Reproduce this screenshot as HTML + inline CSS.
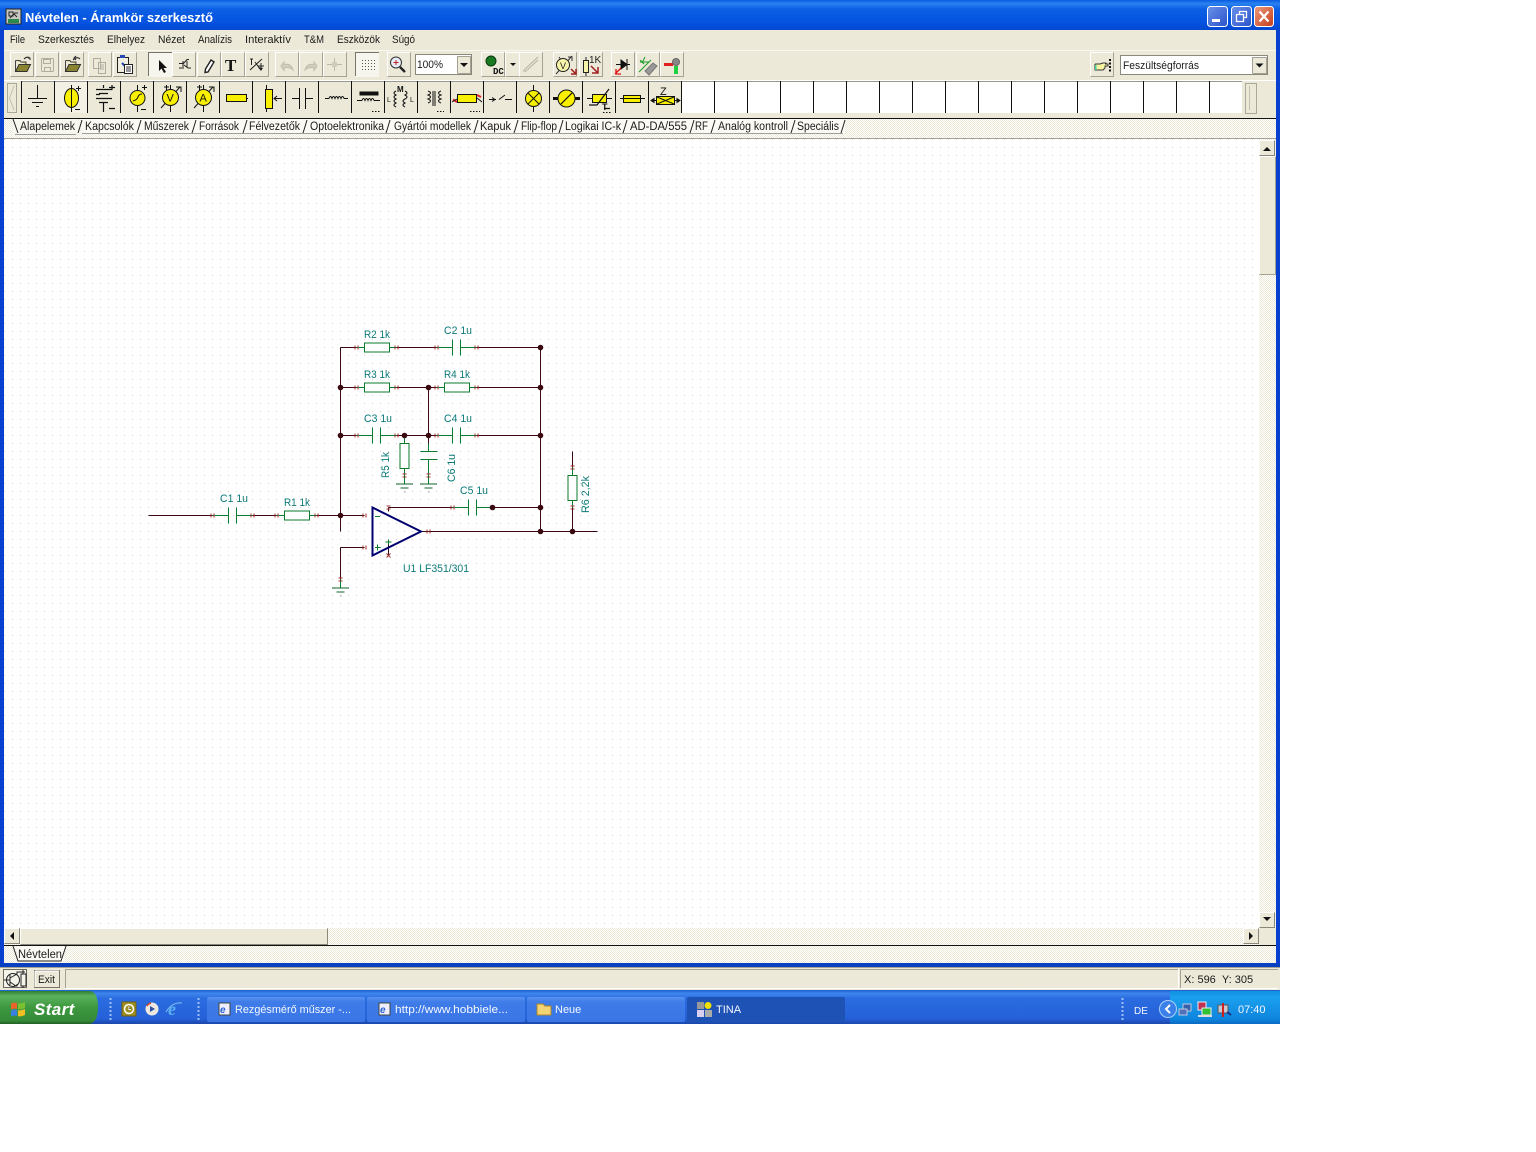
<!DOCTYPE html>
<html><head><meta charset="utf-8"><title>Névtelen - Áramkör szerkesztő</title>
<style>
html,body{margin:0;padding:0;background:#fff;width:1536px;height:1152px;overflow:hidden}
svg{display:block;font-family:"Liberation Sans",sans-serif}
.m{font-size:11px;fill:#1a1a1a}
.l{font-size:11px;fill:#0b7a78}
.t{font-size:11.500px;fill:#1a1a1a}
.w{font-size:11px;fill:#f4f7ff}
</style></head><body>
<svg width="1536" height="1152" viewBox="0 0 1536 1152" xmlns="http://www.w3.org/2000/svg">
<defs>
<linearGradient id="tb" x1="0" y1="0" x2="0" y2="1"><stop offset="0" stop-color="#0a5ae0"/><stop offset=".12" stop-color="#2a83f0"/><stop offset=".3" stop-color="#0c5fe4"/><stop offset=".75" stop-color="#0553e0"/><stop offset="1" stop-color="#0347d0"/></linearGradient>
<linearGradient id="tk" x1="0" y1="0" x2="0" y2="1"><stop offset="0" stop-color="#1d5fd0"/><stop offset=".1" stop-color="#3f86ee"/><stop offset=".25" stop-color="#2a6ce0"/><stop offset=".85" stop-color="#2560d8"/><stop offset="1" stop-color="#1a47a8"/></linearGradient>
<linearGradient id="tr" x1="0" y1="0" x2="0" y2="1"><stop offset="0" stop-color="#1290e0"/><stop offset=".2" stop-color="#1aa0ee"/><stop offset=".85" stop-color="#0f85de"/><stop offset="1" stop-color="#0c6ac0"/></linearGradient>
<linearGradient id="st" x1="0" y1="0" x2="0" y2="1"><stop offset="0" stop-color="#2d7d34"/><stop offset=".15" stop-color="#5ab25c"/><stop offset=".5" stop-color="#3d983f"/><stop offset=".9" stop-color="#358a38"/><stop offset="1" stop-color="#215f24"/></linearGradient>
<linearGradient id="bt" x1="0" y1="0" x2="0" y2="1"><stop offset="0" stop-color="#5a92f0"/><stop offset=".2" stop-color="#3e7ce8"/><stop offset="1" stop-color="#3a76e6"/></linearGradient>
<linearGradient id="mb" x1="0" y1="0" x2="1" y2="1"><stop offset="0" stop-color="#6a92ea"/><stop offset="1" stop-color="#2a52c8"/></linearGradient>
<linearGradient id="cb" x1="0" y1="0" x2="1" y2="1"><stop offset="0" stop-color="#eb9a7e"/><stop offset="1" stop-color="#c63c18"/></linearGradient>
<pattern id="d" width="2" height="2" patternUnits="userSpaceOnUse"><rect width="2" height="2" fill="#fff"/><rect width="1" height="1" fill="#ece9d8"/><rect x="1" y="1" width="1" height="1" fill="#ece9d8"/></pattern>
<pattern id="g" width="8" height="8" patternUnits="userSpaceOnUse" x="4" y="3"><rect width="8" height="8" fill="#fff"/><rect width="1" height="1" fill="#d0d0c4"/></pattern>
<g id="b"><rect width="24" height="25" fill="#ece9d8"/><path d="M.5 24V.5H23" stroke="#fff" fill="none"/><path d="M.5 24.500H23.500V.5" stroke="#a5a294" fill="none"/></g>
<g id="sb"><rect width="16" height="16" fill="#ece9d8"/><path d="M.5 15V.5H15" stroke="#fff" fill="none"/><path d="M.5 15.500H15.500V.5" stroke="#8a887a" fill="none"/></g>
<g id="gnd" stroke="#0a6a28" fill="none"><path d="M-8.500 .5H8.500M-4 4.500H4"/><path d="M0 8.500H1" stroke="#777"/></g>
<g id="rh"><rect x="-12" y="-4.500" width="25" height="9" fill="#fff" stroke="#0a7a2e"/></g>
<g id="rv"><rect x="-4.500" y="-12" width="9" height="25" fill="#fff" stroke="#0a7a2e"/></g>
<g id="tk1"><path d="M-1.500 -2V2M1.500 -2V2" stroke="#9a3030" fill="none"/></g>
<g id="tk2"><path d="M-2 -1.500H2M-2 1.500H2" stroke="#9a3030" fill="none"/></g>
<g id="cap"><path d="M0 -8V8M8 -8V8" stroke="#0a7a2e" fill="none"/></g>
</defs>

<!-- background -->
<rect width="1536" height="1152" fill="#fff"/>
<rect width="1280" height="30" fill="url(#tb)"/>
<rect y="30" width="4" height="937" fill="#0840d0"/>
<rect x="1276" y="30" width="4" height="937" fill="#0840d0"/>
<rect x="4" y="30" width="1272" height="88" fill="#ece9d8"/>

<!-- title -->
<rect x="6" y="9" width="15" height="15" fill="#c8c8c0" stroke="#222"/>
<path d="M9 12h4v4H9zM14 13h4M10 18l4-4 3 3" stroke="#222" fill="none"/>
<rect x="8" y="19" width="11" height="4" fill="#2a8a4a"/>
<text x="25" y="22" font-size="13" font-weight="700" fill="#fff" textLength="188" lengthAdjust="spacingAndGlyphs">Névtelen - Áramkör szerkesztő</text>

<!-- caption buttons -->
<rect x="1207.500" y="6.500" width="20" height="20" rx="3" fill="url(#mb)" stroke="#fff"/>
<rect x="1212" y="19" width="8" height="3" fill="#fff"/>
<rect x="1231.500" y="6.500" width="20" height="20" rx="3" fill="url(#mb)" stroke="#fff"/>
<path d="M1239.500 14.500V11.500H1246.500V17.500H1243.500M1236.500 14.500H1243.500V21.500H1236.500Z" stroke="#fff" fill="none" stroke-width="1.300"/>
<rect x="1254.500" y="6.500" width="19" height="20" rx="3" fill="url(#cb)" stroke="#fff"/>
<path d="M1259.500 11.500L1268.500 21.500M1268.500 11.500L1259.500 21.500" stroke="#fff" stroke-width="2.200"/>

<!-- menu -->
<text class="m" x="10" y="43" textLength="15" lengthAdjust="spacingAndGlyphs">File</text>
<text class="m" x="38" y="43" textLength="56" lengthAdjust="spacingAndGlyphs">Szerkesztés</text>
<text class="m" x="107" y="43" textLength="38" lengthAdjust="spacingAndGlyphs">Elhelyez</text>
<text class="m" x="158" y="43" textLength="27" lengthAdjust="spacingAndGlyphs">Nézet</text>
<text class="m" x="198" y="43" textLength="34" lengthAdjust="spacingAndGlyphs">Analízis</text>
<text class="m" x="245" y="43" textLength="46" lengthAdjust="spacingAndGlyphs">Interaktív</text>
<text class="m" x="304" y="43" textLength="20" lengthAdjust="spacingAndGlyphs">T&amp;M</text>
<text class="m" x="337" y="43" textLength="43" lengthAdjust="spacingAndGlyphs">Eszközök</text>
<text class="m" x="392" y="43" textLength="23" lengthAdjust="spacingAndGlyphs">Súgó</text>
<rect x="4" y="50" width="1272" height="1" fill="#f8f7f0"/>

<!-- toolbar 1 -->
<use href="#b" x="10" y="52"/><use href="#b" x="35" y="52"/><use href="#b" x="60" y="52"/>
<use href="#b" x="88" y="52"/><use href="#b" x="113" y="52"/>
<rect x="148" y="52" width="24" height="25" fill="#f7f6ee"/><path d="M148.500 76V52.500H172" stroke="#77756a" fill="none"/>
<use href="#b" x="172" y="52"/><use href="#b" x="197" y="52"/><use href="#b" x="221" y="52"/><use href="#b" x="245" y="52"/>
<use href="#b" x="275" y="52"/><use href="#b" x="299" y="52"/><use href="#b" x="323" y="52"/>
<rect x="355" y="52" width="24" height="25" fill="#f7f6ee"/><path d="M355.500 76V52.500H379" stroke="#77756a" fill="none"/>
<use href="#b" x="387" y="52"/>
<use href="#b" x="481" y="52"/><use href="#b" x="505" y="52"/><use href="#b" x="519" y="52"/>
<use href="#b" x="553" y="52"/><use href="#b" x="579" y="52"/>
<use href="#b" x="611" y="52"/><use href="#b" x="636" y="52"/><use href="#b" x="660" y="52"/>
<use href="#b" x="1090" y="52"/>

<!-- open -->
<path d="M15.500 60.500H20L21 62H26V64M15.500 60.500V71.500" fill="#d8c860" stroke="#444"/><path d="M15.500 71.500L19 64.500H30.500L27 71.500Z" fill="#8a8430" stroke="#333"/><path d="M24 59q3-3 6-1m0 0l-2 0m2 0l0 2" stroke="#222" fill="none"/>
<!-- save disabled -->
<rect x="41.500" y="58.500" width="12" height="13" rx="1" fill="none" stroke="#b0ad9f"/><rect x="43.500" y="59.500" width="7" height="4" fill="none" stroke="#b0ad9f"/><rect x="44.500" y="67.500" width="6" height="4" fill="none" stroke="#b0ad9f"/>
<!-- open2 -->
<path d="M65.500 60.500H70L71 62H76V64M65.500 60.500V71.500" fill="#d8c860" stroke="#444"/><path d="M65.500 71.500L69 64.500H80.500L77 71.500Z" fill="#8a8430" stroke="#333"/><path d="M73 60q4-4 7-1m-4-3l-2 2 2 2" stroke="#222" fill="none"/>
<!-- copy disabled -->
<path d="M93.500 58.500h7v10h-7zM98.500 62.500h7v11h-7z" fill="#ece9d8" stroke="#b0ad9f"/><path d="M100 65h4M100 67h4M100 69h4" stroke="#b0ad9f"/>
<!-- paste -->
<rect x="117.500" y="57.500" width="11" height="15" fill="#f0eee0" stroke="#222"/><rect x="120" y="55" width="5" height="3" fill="#2848b8"/><path d="M122 63l6 6" stroke="#1a3fb0" stroke-width="2"/><path d="M124.500 64.500h8v9h-8z" fill="#fff" stroke="#222"/><path d="M126 67h5M126 69h5M126 71h5" stroke="#333"/>
<!-- pointer -->
<path d="M159 60V71L161.500 68.500L164 73L166 72L163.500 68H167Z" fill="#111"/>
<!-- wire tool -->
<path d="M179 64.500H183M187 62V68M183 62V70M189 60.500H187L183 65M184 66L188 69H191M179 69H182" stroke="#222" fill="none" transform="translate(0 -1)"/>
<!-- pencil -->
<path d="M211 60L214 62L208 72L205 72.500L205.500 69Z" fill="#fff" stroke="#222" stroke-width="1.400"/>
<!-- T -->
<text x="225" y="71" font-family="Liberation Serif,serif" font-size="17" font-weight="700" fill="#111">T</text>
<!-- 1/4 -->
<path d="M250 70L262 59M250 59H253M251.500 59V65M258 66H264M261 63V70M255 62L260 69" stroke="#222" fill="none"/><path d="M258 67l5 1-2 3z" fill="#222"/>
<!-- undo/redo disabled -->
<path d="M281 66L284 62V64.500Q291 63 293 70Q289 66.500 284 68V70.500Z" fill="#d2cfbf" stroke="#c0bdae"/>
<path d="M317 66L314 62V64.500Q307 63 305 70Q309 66.500 314 68V70.500Z" fill="#d2cfbf" stroke="#c0bdae"/>
<path d="M327 64.500H342M334.500 58V71" stroke="#bcb9aa"/><rect x="332" y="62" width="5" height="5" fill="#cfccbd"/>
<!-- grid -->
<path d="M362 60.500h13M362 63.500h13M362 66.500h13M362 69.500h13" stroke="#555" stroke-dasharray="1 2"/>
<!-- zoom -->
<circle cx="396" cy="62.500" r="5.500" fill="#e8eef8" stroke="#333"/><path d="M393.500 62.500h5M396 60v5" stroke="#c02020"/><path d="M400 67l5 5" stroke="#222" stroke-width="2.400"/>
<!-- zoom combo -->
<rect x="415.500" y="54.500" width="56" height="20" fill="#fff" stroke="#8a887a"/>
<rect x="457" y="56" width="14" height="18" fill="#ece9d8"/><path d="M457.500 73V56.500H470.500M457.500 73.500H470.500V56.500" stroke="#a5a294" fill="none"/><path d="M460 63h8l-4 4z" fill="#111"/>
<text x="417" y="68" class="m" textLength="26" lengthAdjust="spacingAndGlyphs">100%</text>
<!-- DC -->
<circle cx="491" cy="61" r="5" fill="#1a7a22" stroke="#0a3a10"/><text x="493" y="74" font-family="Liberation Mono,monospace" font-size="9" font-weight="700" fill="#111">DC</text>
<path d="M510 63h6l-3 3z" fill="#111"/>
<path d="M523 71L538 57M525 72L538 60" stroke="#b5b2a2" fill="none"/><path d="M523 72l2-5 4 3z" fill="#cfccbd"/>
<!-- meter -->
<path d="M556 74L572 56M568 57h4v4M559 57l2 3" stroke="#333" fill="none"/><circle cx="563" cy="65" r="6.500" fill="#f6f4a8" stroke="#222"/><text x="560" y="69" font-size="9" fill="#222">V</text><path d="M571 69l5 5m-5 0h5v-5" stroke="#a02020" fill="none" stroke-width="1.500"/>
<rect x="583.500" y="60.500" width="5" height="12" fill="#f6f4a8" stroke="#222"/><path d="M586 57v3M586 73v3" stroke="#222"/><text x="589" y="63" font-size="10" fill="#222">1K</text><path d="M591 66l7 7m-6 0h6v-6" stroke="#a02020" fill="none" stroke-width="1.500"/>
<!-- diode etc -->
<path d="M616 64.500H630M621 60v9l6-4.500z" fill="#111" stroke="#111"/><path d="M627 59V70" stroke="#111"/><path d="M615 74l6-6m-5 1v5h5" stroke="#e01010" fill="none" stroke-width="1.300"/>
<path d="M639 72L651 60M645 57l-3 6M640 60l4 4M649 62l-9 0" stroke="#1a9a2a" fill="none"/><path d="M645 71l8-8 4 3-8 9z" fill="#999" stroke="#777"/>
<rect x="664" y="63" width="9" height="3" fill="#e02020"/><circle cx="676" cy="62" r="3.500" fill="#888" stroke="#666"/><rect x="674" y="66" width="4" height="8" fill="#20d040"/>
<!-- hand -->
<path d="M1095 64h5l3-1h3v1h-1M1095 64v6h8l2-2v-2h3v-2h-3" fill="#f8f4a0" stroke="#333"/><path d="M1110 59v13" stroke="#111" stroke-width="2" stroke-dasharray="2 1.500"/>
<rect x="1095" y="65" width="1.500" height="5" fill="#40d0a0"/>
<!-- source combo -->
<rect x="1120.500" y="55.500" width="147" height="19" fill="#fff" stroke="#8a887a"/>
<rect x="1252" y="57" width="15" height="17" fill="#ece9d8"/><path d="M1252.500 73V57.500H1266.500M1252.500 73.500H1266.500V57.500" stroke="#a5a294" fill="none"/><path d="M1255.500 63.500h8l-4 4z" fill="#111"/>
<text class="m" x="1123" y="69" textLength="76" lengthAdjust="spacingAndGlyphs">Feszültségforrás</text>

<!-- toolbar 2 -->
<rect x="4" y="80" width="1272" height="1" fill="#fff"/>
<rect x="7.500" y="83.500" width="9" height="29" fill="#ece9d8" stroke="#aaa89a"/>
<path d="M14 86L9.500 98L14 110" stroke="#c2c0b2" fill="none"/>
<path d="M21 81.500H1242" stroke="#9a988a"/>
<rect x="681" y="82" width="561" height="31" fill="#fff"/>
<rect x="54" y="82" width="33" height="31" fill="#f3f1e6"/>
<path d="M21.500 81V113M54.500 81V113M87.500 81V113M120.500 81V113M153.500 81V113M186.500 81V113M219.500 81V113M252.500 81V113M285.500 81V113M318.500 81V113M351.500 81V113M384.500 81V113M417.500 81V113M450.500 81V113M483.500 81V113M516.500 81V113M549.500 81V113M582.500 81V113M615.500 81V113M648.500 81V113M681.500 81V113M714.500 81V113M747.500 81V113M780.500 81V113M813.500 81V113M846.500 81V113M879.500 81V113M912.500 81V113M945.500 81V113M978.500 81V113M1011.500 81V113M1044.500 81V113M1077.500 81V113M1110.500 81V113M1143.500 81V113M1176.500 81V113M1209.500 81V113" stroke="#111"/>
<rect x="1245.500" y="83.500" width="11" height="30" fill="#ece9d8" stroke="#aaa89a"/><path d="M1249.500 86V110" stroke="#c2c0b2"/>

<!-- component icons -->
<g stroke="#111" fill="none">
<path d="M37.500 85V98M28 98.500H47M32 102.500H43M36 106.500H39"/>
<path d="M71.500 85V112"/><ellipse cx="71.500" cy="98" rx="7" ry="9.500" fill="#f8f000"/><path d="M71.500 89V107" /><path d="M76 88.500H81M78.500 86V91M75 109.500H80"/>
<path d="M103.500 85V88M96 89.500H112M99 93.500H108M96 98.500H112M99 102.500H108M103.500 103V112M109 87.500H115M112 85V90M109 108.500H115M96 94.500H100" stroke-width="1.200"/>
<path d="M137.500 85V112"/><circle cx="137.500" cy="98" r="7.500" fill="#f8f000"/><path d="M133 101Q137 100 138 97T142 94"/><path d="M142 87.500H147M144.500 85V90M141 109.500H146"/>
<path d="M170.500 85V112M161 108L180 87M176 87h5v5M164 87h5M166.500 85v5"/><circle cx="170.500" cy="97.500" r="8" fill="#f8f000"/><text x="166.500" y="101.500" font-size="11" fill="#111" stroke="none">V</text>
<path d="M203.500 85V112M194 108L213 87M209 87h5v5M197 87h5M199.500 85v5"/><circle cx="203.500" cy="97.500" r="8" fill="#f8f000"/><text x="199.500" y="101.500" font-size="11" fill="#111" stroke="none">A</text>
<path d="M226 98.500H248"/><rect x="226.500" y="94.500" width="20" height="7" fill="#f8f000" stroke-width="1"/>
<path d="M266.500 85V112"/><rect x="265.500" y="89.500" width="7" height="19" fill="#f8f000"/><path d="M282 98.500H274M277 96l-3 2.500 3 2.500"/>
<path d="M292 98.500H299M305 98.500H313M299.500 88V109M305.500 88V109"/>
<path d="M325 98.500H329M344 98.500H348M329 98.500q1.500-4 3 0q1.500-4 3 0q1.500-4 3 0q1.500-4 3 0q1.500-4 3 0"/>
<path d="M357 100.500H362M374 100.500H380M362 100.500q1.500-4 3 0q1.500-4 3 0q1.500-4 3 0q1.500-4 3 0"/><rect x="360" y="92" width="18" height="3" fill="#111"/><path d="M372 111.500H381" stroke-dasharray="1.500 1.500"/>
<text x="397" y="92" font-size="8" font-weight="700" fill="#111" stroke="none">M</text><path d="M396 91q-4 2 0 4q-4 2 0 4q-4 2 0 4q-4 2 0 4M405 91q4 2 0 4q4 2 0 4q-4 2 0 4q-4 2 0 4"/><text x="387" y="102" font-size="7" fill="#111" stroke="none">L</text><text x="410" y="102" font-size="7" fill="#111" stroke="none">L</text>
<path d="M428 91q5 2 0 4q5 2 0 4q5 2 0 4M441 91q-5 2 0 4q-5 2 0 4q-5 2 0 4M433 91V106M435 91V106" stroke-width="1"/><path d="M437 111.500H444" stroke-dasharray="1.500 1.500"/>
<path d="M453 99.500L457 102M481 97L477 95" stroke="#e02020" stroke-width="2"/><rect x="457.500" y="94.500" width="19" height="8" fill="#f8f000"/><path d="M470 111.500H480" stroke-dasharray="1.500 1.500"/><path d="M452 102L457 99M477 98L482 102"/>
<path d="M489 99.500H496M499 99.500L505 95M505 99.500H512M492 97.500l3 2-3 2"/>
<path d="M533.500 85V112"/><circle cx="533.500" cy="98.500" r="8" fill="#f8f000"/><path d="M528 93L539 104M539 93L528 104"/>
<path d="M553 98.500H580" stroke-width="3"/><circle cx="566.500" cy="98.500" r="8.500" fill="#f8f000"/><path d="M561 104L572 93" stroke-width="1.200"/>
<path d="M587 98.500H612"/><rect x="592.500" y="94.500" width="14" height="8" fill="#f8f000"/><path d="M589 105H597L609 89M604 108.500H610" stroke-width="1.200"/><text x="602" y="110" font-size="9" font-weight="700" fill="#111" stroke="none">T</text><path d="M603 112.500H611" stroke-dasharray="1.500 1.500"/>
<path d="M620 98.500H645"/><rect x="623.500" y="95.500" width="17" height="7" fill="#f8f000"/><path d="M622 98.500H642"/>
<text x="660" y="95" font-size="11" fill="#111" stroke="none">Z</text><path d="M651 100.500H680M651 100.500l3-2v4zM680 100.500l-3-2v4z" fill="#111"/><rect x="656.500" y="96.500" width="18" height="8" fill="#f8f000"/><path d="M657 97L674 104M674 97L657 104"/>
</g>

<!-- tab strip -->
<rect x="4" y="118" width="1272" height="1" fill="#111"/>
<rect x="4" y="119" width="1272" height="19" fill="url(#d)"/>
<rect x="13" y="119" width="66" height="15" fill="#f8f7ef"/>
<rect x="81" y="119" width="764" height="15" fill="#fbfaf4"/>
<path d="M82 133.500H843M15 134.500H76" stroke="#555" stroke-opacity=".55"/>
<g stroke="#222" fill="none">
<path d="M13 119L18 133"/>
<path d="M78 133Q80 127 82 120M137 133Q139 127 141 120M192 133Q194 127 196 120M243 133Q245 127 247 120M303 133Q305 127 307 120M386 133Q388 127 390 120M474 133Q476 127 478 120M514 133Q516 127 518 120M559 133Q561 127 563 120M623 133Q625 127 627 120M690 133Q692 127 694 120M711 133Q713 127 715 120M791 133Q793 127 795 120M841 133Q843 127 845 120"/>
</g>
<text class="t" x="20" y="130" textLength="55" lengthAdjust="spacingAndGlyphs">Alapelemek</text>
<text class="t" x="85" y="130" textLength="49" lengthAdjust="spacingAndGlyphs">Kapcsolók</text>
<text class="t" x="144" y="130" textLength="45" lengthAdjust="spacingAndGlyphs">Műszerek</text>
<text class="t" x="199" y="130" textLength="40" lengthAdjust="spacingAndGlyphs">Források</text>
<text class="t" x="249" y="130" textLength="51" lengthAdjust="spacingAndGlyphs">Félvezetők</text>
<text class="t" x="310" y="130" textLength="74" lengthAdjust="spacingAndGlyphs">Optoelektronika</text>
<text class="t" x="394" y="130" textLength="77" lengthAdjust="spacingAndGlyphs">Gyártói modellek</text>
<text class="t" x="480" y="130" textLength="31" lengthAdjust="spacingAndGlyphs">Kapuk</text>
<text class="t" x="521" y="130" textLength="36" lengthAdjust="spacingAndGlyphs">Flip-flop</text>
<text class="t" x="565" y="130" textLength="56" lengthAdjust="spacingAndGlyphs">Logikai IC-k</text>
<text class="t" x="630" y="130" textLength="57" lengthAdjust="spacingAndGlyphs">AD-DA/555</text>
<text class="t" x="695" y="130" textLength="13" lengthAdjust="spacingAndGlyphs">RF</text>
<text class="t" x="718" y="130" textLength="70" lengthAdjust="spacingAndGlyphs">Analóg kontroll</text>
<text class="t" x="797" y="130" textLength="42" lengthAdjust="spacingAndGlyphs">Speciális</text>

<!-- canvas -->
<rect x="4" y="138" width="1255" height="790" fill="url(#g)"/>
<rect x="4" y="138" width="1272" height="1" fill="#a5a294"/>

<!-- schematic -->
<g transform="translate(.5 .5)" fill="none">
<g stroke="#3a0810">
<path d="M340 347H356M396 347H436M476 347H540M340 387H356M396 387H436M476 387H540M340 435H356M396 435H436M476 435H540"/>
<path d="M340 347V531M340 547V579M540 347V531M428 387V435M404 435V443M428 435V451M148 515H212M252 515H276M316 515H364M388 507H452M492 507H540M421 531H597M364 547H340M572 451V467M572 507V531M404 468V475M428 459V475"/>
<path d="M388 507V511M388 541V555"/>
</g>
<g stroke="#0a7a2e">
<path d="M356 347H396M436 347H452M460 347H476M356 387H396M436 387H476M356 435H372M380 435H396M436 435H452M460 435H476M212 515H228M236 515H252M276 515H316M452 507H468M476 507H492"/>
<path d="M404 468V475M404 443V435M428 451V443M428 459V475M572 467V475M572 500V507"/>
</g>
<use href="#rh" x="376" y="347"/><use href="#rh" x="376" y="387"/><use href="#rh" x="456" y="387"/><use href="#rh" x="296" y="515"/>
<use href="#rv" x="404" y="455"/><use href="#rv" x="572" y="487"/>
<use href="#cap" x="452" y="347"/><use href="#cap" x="372" y="435"/><use href="#cap" x="452" y="435"/><use href="#cap" x="228" y="515"/><use href="#cap" x="468" y="507"/>
<path d="M420 451H437M420 459H437" stroke="#0a7a2e"/>
<use href="#gnd" x="404" y="483"/><use href="#gnd" x="428" y="483"/><use href="#gnd" x="340" y="587"/>
<path d="M404 475V483M428 475V483M340 579V587" stroke="#0a7a2e"/>
<use href="#tk1" x="356" y="347"/><use href="#tk1" x="396" y="347"/><use href="#tk1" x="436" y="347"/><use href="#tk1" x="476" y="347"/>
<use href="#tk1" x="356" y="387"/><use href="#tk1" x="396" y="387"/><use href="#tk1" x="436" y="387"/><use href="#tk1" x="476" y="387"/>
<use href="#tk1" x="356" y="435"/><use href="#tk1" x="396" y="435"/><use href="#tk1" x="436" y="435"/><use href="#tk1" x="476" y="435"/>
<use href="#tk1" x="212" y="515"/><use href="#tk1" x="252" y="515"/><use href="#tk1" x="276" y="515"/><use href="#tk1" x="316" y="515"/>
<use href="#tk1" x="364" y="515"/><use href="#tk1" x="364" y="547"/><use href="#tk1" x="428" y="531"/><use href="#tk1" x="452" y="507"/>
<use href="#tk2" x="404" y="475"/><use href="#tk2" x="428" y="475"/><use href="#tk2" x="572" y="467"/><use href="#tk2" x="572" y="507"/><use href="#tk2" x="340" y="579"/>
<use href="#tk2" x="388" y="507"/>
<path d="M386 553L390 557M390 553L386 557" stroke="#9a3030"/>
<path d="M372 507L420.500 531L372 555Z" stroke="#00006e" stroke-width="2"/>
<path d="M374.500 516H379.500M374.500 547H380M377 544V550M385 541.500H391M388 539V544" stroke="#0a7a2e"/>
<g fill="#3a0810">
<circle cx="340" cy="387" r="2.800"/><circle cx="340" cy="435" r="2.800"/><circle cx="340" cy="515" r="2.800"/>
<circle cx="428" cy="387" r="2.800"/><circle cx="428" cy="435" r="2.800"/><circle cx="404" cy="435" r="2.800"/>
<circle cx="540" cy="347" r="2.800"/><circle cx="540" cy="387" r="2.800"/><circle cx="540" cy="435" r="2.800"/><circle cx="540" cy="507" r="2.800"/><circle cx="540" cy="531" r="2.800"/>
<circle cx="572" cy="531" r="2.800"/><circle cx="492" cy="507" r="2.800"/>
</g>
</g>
<text class="l" x="364" y="338" textLength="26" lengthAdjust="spacingAndGlyphs">R2 1k</text>
<text class="l" x="444" y="334" textLength="28" lengthAdjust="spacingAndGlyphs">C2 1u</text>
<text class="l" x="364" y="378" textLength="26" lengthAdjust="spacingAndGlyphs">R3 1k</text>
<text class="l" x="444" y="378" textLength="26" lengthAdjust="spacingAndGlyphs">R4 1k</text>
<text class="l" x="364" y="422" textLength="28" lengthAdjust="spacingAndGlyphs">C3 1u</text>
<text class="l" x="444" y="422" textLength="28" lengthAdjust="spacingAndGlyphs">C4 1u</text>
<text class="l" x="460" y="494" textLength="28" lengthAdjust="spacingAndGlyphs">C5 1u</text>
<text class="l" x="220" y="502" textLength="28" lengthAdjust="spacingAndGlyphs">C1 1u</text>
<text class="l" x="284" y="506" textLength="26" lengthAdjust="spacingAndGlyphs">R1 1k</text>
<text class="l" x="403" y="572" textLength="66" lengthAdjust="spacingAndGlyphs">U1 LF351/301</text>
<text class="l" transform="translate(389 478) rotate(-90)" textLength="26" lengthAdjust="spacingAndGlyphs">R5 1k</text>
<text class="l" transform="translate(455 482) rotate(-90)" textLength="28" lengthAdjust="spacingAndGlyphs">C6 1u</text>
<text class="l" transform="translate(589 513) rotate(-90)" textLength="37" lengthAdjust="spacingAndGlyphs">R6 2,2k</text>

<!-- scrollbars -->
<rect x="1259" y="139" width="17" height="789" fill="url(#d)"/>
<use href="#sb" x="1259" y="140"/><path d="M1263 151h8l-4-4z" fill="#111"/>
<rect x="1259" y="156" width="16" height="119" fill="#ece9d8"/><path d="M1259.500 274V156.500H1275" stroke="#fff" fill="none"/><path d="M1259.500 274.500H1275.500V156.500" stroke="#a5a294" fill="none"/>
<use href="#sb" x="1259" y="912"/><path d="M1263 917h8l-4 4z" fill="#111"/>
<rect x="4" y="928" width="1255" height="17" fill="url(#d)"/>
<rect x="1259" y="928" width="17" height="17" fill="#ece9d8"/>
<use href="#sb" x="4" y="928"/><path d="M14 932v8l-4-4z" fill="#111"/>
<rect x="20" y="928" width="308" height="17" fill="#ece9d8"/><path d="M20.500 944V928.500H327" stroke="#fff" fill="none"/><path d="M20.500 944.500H327.500V928.500" stroke="#8a887a" fill="none"/>
<use href="#sb" x="1243" y="928"/><path d="M1249 932v8l4-4z" fill="#111"/>

<!-- bottom tab strip -->
<rect x="4" y="945" width="1272" height="1" fill="#111"/>
<rect x="4" y="946" width="1272" height="17" fill="url(#d)"/>
<rect x="17" y="946" width="47" height="15" fill="#fbfaf4"/>
<path d="M13 946L18 961H61Q63 955 66 946" stroke="#222" fill="none"/>
<text class="t" x="18" y="958" textLength="44" lengthAdjust="spacingAndGlyphs">Névtelen</text>
<rect y="963" width="1280" height="4" fill="#0840c0"/>

<!-- status bar -->
<rect y="967" width="1280" height="23" fill="#ece9d8"/>
<rect y="967" width="1280" height="1" fill="#a5a294"/>
<rect x="3.500" y="969.500" width="23" height="18" fill="#f5f4ea" stroke="#6a685c"/>
<circle cx="13" cy="980" r="6.500" fill="none" stroke="#222"/><path d="M4 980H10M10 975V985M10 978L17 974V972H25M10 982L16 986M17 984V986H14M21 974H26V986H21ZM23 970V974M23 986V988" stroke="#222" fill="none"/>
<rect x="34.500" y="970.500" width="25" height="17" fill="#ece9d8" stroke="#77756a"/><path d="M35 971H59M35 971V987" stroke="#fff"/>
<text x="38" y="983" class="m" textLength="17" lengthAdjust="spacingAndGlyphs">Exit</text>
<path d="M65.500 988V969.500H1178" stroke="#a5a294" fill="none"/><path d="M65.500 988.500H1178.500V969.500" stroke="#fff" fill="none"/>
<path d="M1180.500 988V969.500H1278" stroke="#a5a294" fill="none"/><path d="M1180.500 988.500H1278" stroke="#fff" fill="none"/>
<text class="m" x="1184" y="983">X: 596&#160;&#160;Y: 305</text>

<!-- taskbar -->
<rect y="990" width="1280" height="34" fill="url(#tk)"/>
<path d="M0 991H90Q98 992 98 1007Q98 1022 90 1024H0Z" fill="url(#st)"/>
<g transform="translate(11 1002)">
<path d="M0 1.500Q3 0 6 1V7Q3 6 0 7.500Z" fill="#e86428"/><path d="M7 1.200Q10 2 14 0V6Q10 8 7 7.200Z" fill="#7ac030"/><path d="M0 8.500Q3 7 6 8V14Q3 13 0 14.500Z" fill="#3a80e0"/><path d="M7 8.200Q10 9 14 7V13Q10 15 7 14.200Z" fill="#f0c020"/>
</g>
<text x="34" y="1015" font-size="17" font-weight="700" font-style="italic" fill="#fff" letter-spacing=".4">Start</text>
<path d="M110.500 998V1020M198.500 998V1020M1122.500 998V1020" stroke="#9cc0f8" stroke-dasharray="2 2" stroke-width="2"/>
<rect x="122" y="1002" width="14" height="14" fill="#a09020" stroke="#706010"/><circle cx="129" cy="1009" r="4.500" fill="none" stroke="#fff" stroke-width="1.500"/><path d="M129 1006.500V1009.500H131" stroke="#fff"/>
<circle cx="152" cy="1009" r="6.500" fill="#ece8e0"/><path d="M150 1006l5 3-5 3z" fill="#3050a0"/><path d="M147 1006a6 6 0 0 1 4-3" stroke="#d04020" fill="none" stroke-width="1.500"/>
<text x="168" y="1015" font-family="Liberation Serif,serif" font-size="18" font-style="italic" font-weight="700" fill="#5ab0f0">e</text>
<path d="M166 1012Q172 1002 182 1003" stroke="#80c0f0" fill="none"/>

<rect x="207" y="997" width="158" height="25" rx="2" fill="url(#bt)"/>
<rect x="367" y="997" width="158" height="25" rx="2" fill="url(#bt)"/>
<rect x="527" y="997" width="158" height="25" rx="2" fill="url(#bt)"/>
<rect x="687" y="997" width="158" height="25" rx="2" fill="#1e52b4"/>
<g transform="translate(218 1002)"><rect x="1" y="1" width="11" height="12" fill="#eef" stroke="#444"/><text x="2" y="11" font-size="10" font-style="italic" font-weight="700" fill="#2a60d0">e</text></g>
<g transform="translate(378 1002)"><rect x="1" y="1" width="11" height="12" fill="#eef" stroke="#444"/><text x="2" y="11" font-size="10" font-style="italic" font-weight="700" fill="#2a60d0">e</text></g>
<path d="M537 1004H543L545 1006H551V1015H537Z" fill="#f2d272" stroke="#a8862a"/>
<g transform="translate(697 1002)"><rect width="7" height="7" fill="#999"/><circle cx="11" cy="3.500" r="3.500" fill="#f0e000"/><rect y="8" width="7" height="7" fill="#d8d0f0"/><rect x="8" y="8" width="7" height="7" fill="#aaa"/></g>
<text class="w" x="235" y="1013" textLength="116" lengthAdjust="spacingAndGlyphs">Rezgésmérő műszer -...</text>
<text class="w" x="395" y="1013" textLength="113" lengthAdjust="spacingAndGlyphs">http://www.hobbiele...</text>
<text class="w" x="555" y="1013">Neue</text>
<text class="w" x="716" y="1013">TINA</text>
<text class="w" x="1134" y="1014" style="font-size:10px">DE</text>

<rect x="1170" y="991" width="110" height="33" fill="url(#tr)"/>
<circle cx="1168" cy="1009" r="8.500" fill="#3a80e8" stroke="#a8d0f8"/><path d="M1170 1005L1166 1009L1170 1013" stroke="#fff" stroke-width="2" fill="none"/>
<g>
<rect x="1183" y="1004" width="8" height="7" fill="#3860a8" stroke="#c0c8e0"/><rect x="1179" y="1009" width="8" height="6" fill="#5070b8" stroke="#c0c8e0"/>
<rect x="1198" y="1002" width="8" height="8" fill="#c03050" stroke="#eee"/><rect x="1202" y="1008" width="9" height="7" fill="#30c030" stroke="#eee"/><rect x="1198" y="1015" width="14" height="2" fill="#ddd"/>
<rect x="1218" y="1005" width="10" height="8" fill="#c8c8d0" stroke="#555"/><path d="M1223 1003V1017" stroke="#d02020" stroke-width="2"/><path d="M1227 1012l4 3" stroke="#203080" stroke-width="2"/>
</g>
<text class="w" x="1238" y="1013">07:40</text>
</svg>
</body></html>
